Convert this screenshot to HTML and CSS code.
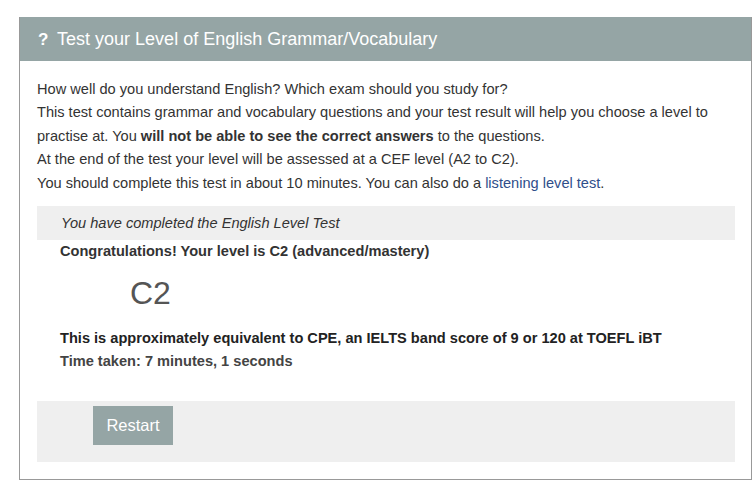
FILE: index.html
```html
<!DOCTYPE html>
<html lang="en">
<head>
  <meta charset="UTF-8">
  <title>English Level Test</title>
  <link rel="stylesheet" href="styles.css">
</head>
<body>
  <div class="panel">
    <div class="panel-heading">
      <span class="icon">?</span> Test your Level of English Grammar/Vocabulary
    </div>
    <div class="panel-body">
      <div class="intro">
        How well do you understand English? Which exam should you study for?<br>
        This test contains grammar and vocabulary questions and your test result will help you choose a level to practise at. You <b>will not be able to see the correct answers</b> to the questions.<br>
        At the end of the test your level will be assessed at a CEF level (A2 to C2).<br>
        You should complete this test in about 10 minutes. You can also do a <a href="#">listening level test</a>.
      </div>

      <div class="status">You have completed the English Level Test</div>

      <div class="result">
        <div class="congrats">Congratulations! Your level is C2 (advanced/mastery)</div>
        <div class="level">C2</div>
        <div class="equiv">This is approximately equivalent to CPE, an IELTS band score of 9 or 120 at TOEFL iBT</div>
        <div class="time">Time taken: 7 minutes, 1 seconds</div>
      </div>

      <div class="actions">
        <button type="button" class="btn">Restart</button>
      </div>
    </div>
  </div>
</body>
</html>
```

FILE: styles.css
```css
body {
  font-family: "Liberation Sans", Arial, sans-serif;
  font-size: 14.6px;
  color: #333;
  background-color: #fff;
  margin: 0;
  padding: 17px 4px 20px 19px;
}
.panel {
  border: 1px solid #999;
  border-top: none;
}
.panel-heading {
  background-color: #95a5a5;
  color: #fff;
  font-size: 18px;
  height: 44px;
  line-height: 44px;
  padding: 0 18px;
}
.panel-heading .icon {
  font-weight: bold;
  font-size: 17px;
  margin-right: 4px;
}
.panel-body {
  padding: 17px 16px 17px 17px;
}
.intro {
  line-height: 23.4px;
}
.intro a {
  color: #2f4e8a;
  text-decoration: none;
}
.status {
  background-color: #efefef;
  font-style: italic;
  padding: 0 24px;
  height: 34px;
  line-height: 34px;
  margin-top: 11px;
}
.result {
  padding: 0 23px;
}
.congrats {
  font-weight: bold;
  line-height: 22px;
}
.level {
  font-size: 32px;
  color: #555;
  margin: 11px 0 0 70px;
  line-height: 40px;
}
.equiv {
  font-weight: bold;
  color: #222;
  margin-top: 14px;
  line-height: 23px;
}
.time {
  font-weight: bold;
  color: #444;
  line-height: 23px;
}
.actions {
  background-color: #efefef;
  margin-top: 28px;
  height: 61px;
  padding: 5px 0 0 56px;
  box-sizing: border-box;
}
.btn {
  background-color: #95a5a5;
  color: #fff;
  border: none;
  font-family: inherit;
  font-size: 16.5px;
  width: 80px;
  height: 39px;
  cursor: pointer;
}
```
